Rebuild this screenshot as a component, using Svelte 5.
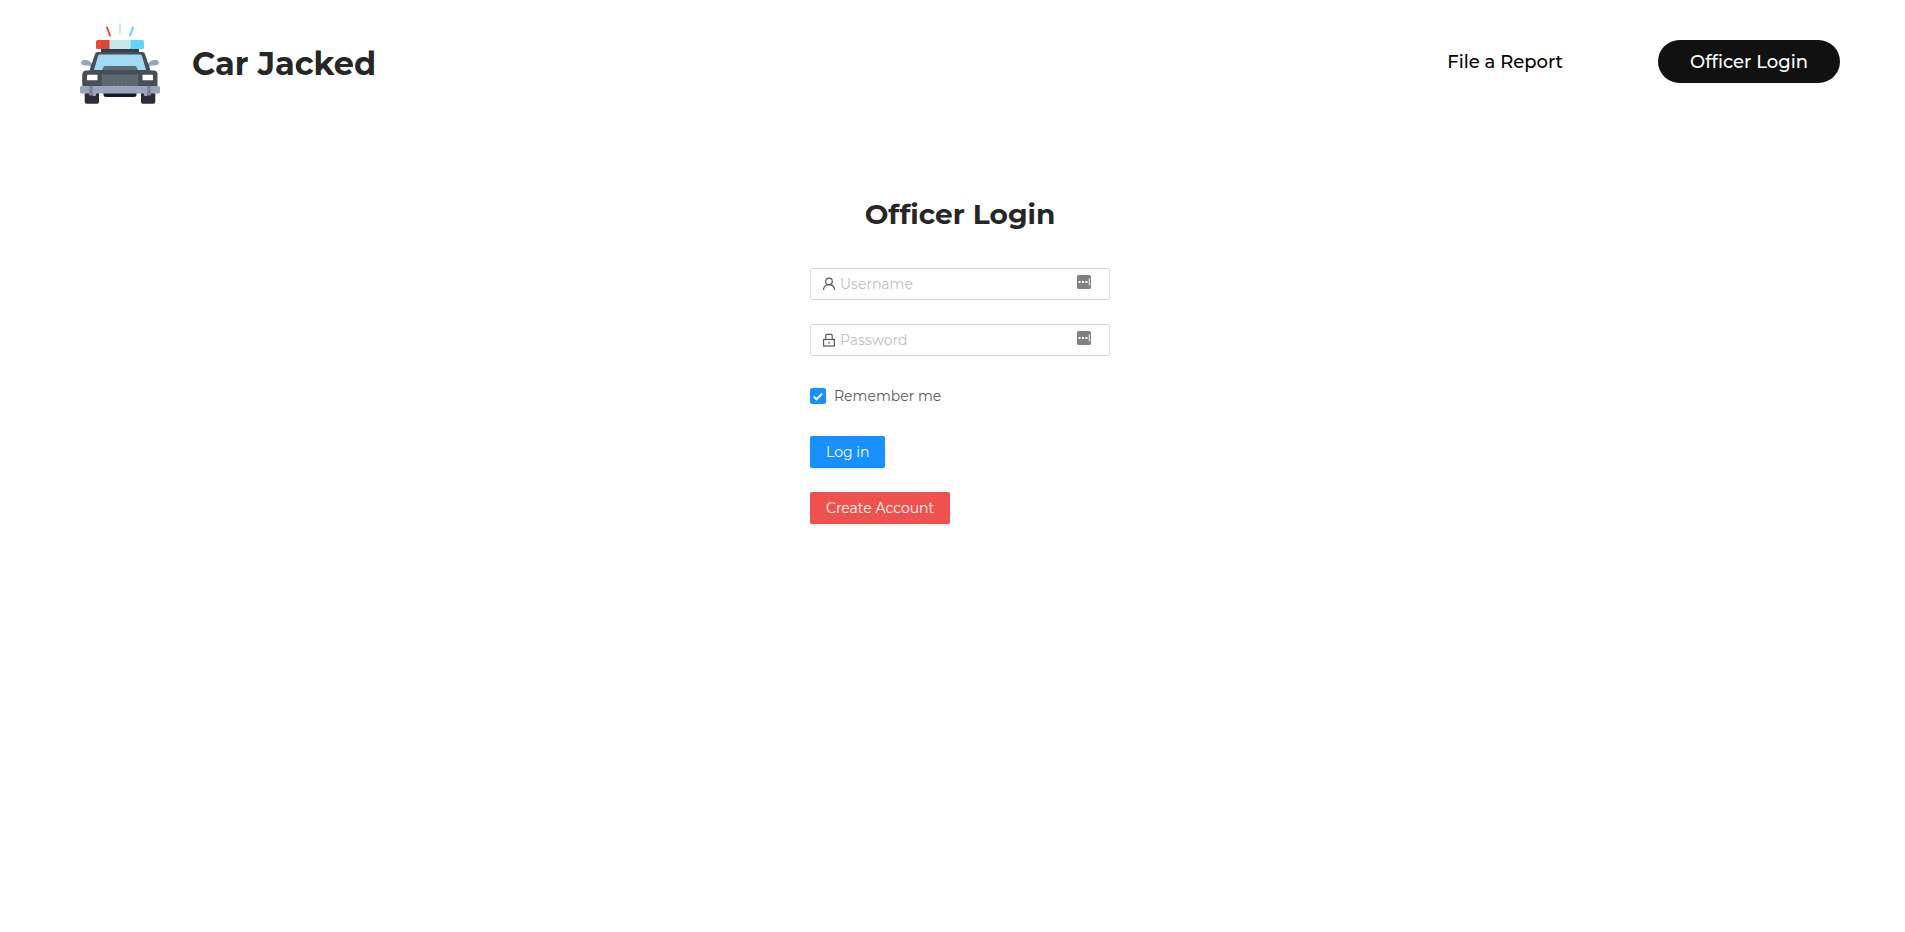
<script>
  let username = $state('');
  let password = $state('');
  let remember = $state(true);
</script>

{#snippet keyBadge()}
  <svg class="badge" viewBox="0 0 14 14" aria-hidden="true">
    <rect width="14" height="14" rx="1.5" fill="#7f7f7f" />
    <path d="M1.6 6h2v2h-2zM5 6h2v2h-2zM8.400 6h2v2h-2zM11.800 3.500h1v7h-1z" fill="#fff" />
  </svg>
{/snippet}

<header>
  <a class="brand" href="#home">
    <svg class="logo" viewBox="0 0 80 80" aria-hidden="true">
      <g stroke-width="2" stroke-linecap="round">
        <path d="M27 3.500l3 8" stroke="#e64c3c" />
        <path d="M40 1v8" stroke="#c8e6ea" />
        <path d="M53 3.500l-3 8" stroke="#60d5f5" />
      </g>
      <path d="M4.700 67H19v10.700a2 2 0 0 1-2 2H6.700a2 2 0 0 1-2-2zM61 67h14.300v10.700a2 2 0 0 1-2 2H63a2 2 0 0 1-2-2z" fill="#2c2d3c" />
      <path d="M23.500 67h33v3.500a2.500 2.500 0 0 1-2.500 2.500H26a2.500 2.500 0 0 1-2.500-2.500z" fill="#0c1c2c" />
      <rect x="21" y="24" width="38" height="6" fill="#394049" />
      <path d="M12 44l-3-2.500H5.500C3 41.500 1 40.500 1 38.300 1 36.600 3 36 5 36c4 0 6 1.700 7 4zM68 44l3-2.500h3.500c2.500 0 4.500-1 4.500-3.200 0-1.700-2-2.300-4-2.300-4 0-6 1.700-7 4z" fill="#9aa5ba" />
      <path d="M18 28h44c1.500 0 2.500.8 3 2l5.500 16.500H74c2 0 3.500 1.500 3.500 3.500v12h-75V50c0-2 1.500-3.500 3.500-3.500h3.500L15 30c.5-1.200 1.500-2 3-2z" fill="#464f59" />
      <path d="M3 61V50" stroke="#394049" />
      <path d="M20 30.500h40c1 0 1.800.6 2 1.500L66 46H14l4-14c.3-.9 1-1.500 2-1.500z" fill="#a2daf4" />
      <path d="M21.700 47l1.500-3.500c.5-1 1.300-1.500 2.300-1.500h29c1 0 1.800.5 2.300 1.500l1.500 3.500z" fill="#5f6972" />
      <rect x="13" y="46" width="54" height="4.500" fill="#464f59" />
      <rect x="21.700" y="50.500" width="36.600" height="12" fill="#5f6972" />
      <path d="M27 56h28M27 60h28" stroke="#555e67" stroke-width="1" stroke-dasharray="2 2" />
      <rect x="7" y="50.700" width="10.500" height="5.500" rx=".5" fill="#fff" />
      <rect x="62.500" y="50.700" width="10.500" height="5.500" rx=".5" fill="#fff" />
      <rect x="0" y="62" width="80" height="7.500" rx="1.500" fill="#9aa5ba" />
      <path d="M9 62h4v9.500H9zM67 62h4v9.500h-4z" fill="#7c879b" />
      <path d="M13 62h3v9a1 1 0 0 1-1 1h-2zM67 62h-3v9a1 1 0 0 0 1 1h2z" fill="#9aa5ba" />
      <path d="M17.500 16H30v9H17.500a1.500 1.500 0 0 1-1.500-1.500v-6a1.500 1.500 0 0 1 1.500-1.500z" fill="#e64c3c" />
      <path d="M21 16h9v9h-9z" fill="#d9473a" />
      <path d="M29.500 16h21v9h-21z" fill="#c8e6ea" />
      <path d="M50.500 16h12a1.500 1.500 0 0 1 1.500 1.500v6a1.500 1.500 0 0 1-1.500 1.500h-12z" fill="#60d5ff" />
    </svg>
    <span class="name">Car Jacked</span>
  </a>
  <nav>
    <a class="link" href="#report">File a Report</a>
    <a class="pill" href="#login">Officer Login</a>
  </nav>
</header>

<main>
  <form onsubmit={(e) => e.preventDefault()}>
    <h1>Officer Login</h1>
    <label class="field">
      <svg class="icon" viewBox="0 0 14 14" fill="none" stroke="#595959" stroke-width="1.2" aria-hidden="true">
        <circle cx="7" cy="4.400" r="3.300" />
        <path d="M1.500 13c0-3.200 2.200-5.300 5.500-5.300s5.500 2.100 5.500 5.300" />
      </svg>
      <input type="text" placeholder="Username" aria-label="Username" bind:value={username} />
      {@render keyBadge()}
    </label>
    <label class="field">
      <svg class="icon" viewBox="0 0 14 14" fill="none" stroke="#595959" stroke-width="1.200" aria-hidden="true">
        <rect x="1.600" y="6.500" width="10.800" height="6.500" />
        <path d="M3.800 6.500V2.600c0-.7.4-1.200 1.100-1.200h4.200c.7 0 1.100.5 1.100 1.200v3.900M7 8.700v2" />
      </svg>
      <input type="password" placeholder="Password" aria-label="Password" bind:value={password} />
      {@render keyBadge()}
    </label>
    <label class="remember">
      <input type="checkbox" bind:checked={remember} />
      <span>Remember me</span>
    </label>
    <button class="primary" type="submit">Log in</button>
    <button class="danger" type="button">Create Account</button>
  </form>
</main>

<style>
  :global(body) {
    margin: 0;
    background: #fff;
    color: #262626;
    font-family: Montserrat, Inter, sans-serif;
    font-size: 14px;
    font-weight: 400;
    font-feature-settings: "tnum", "liga" 0;
  }
  a {
    text-decoration: none;
  }
  header {
    display: flex;
    justify-content: space-between;
    align-items: center;
    padding: 24px 65px 24px 80px;
  }
  .brand {
    display: flex;
    align-items: center;
    gap: 32px;
    color: #262626;
  }
  .logo {
    width: 80px;
    height: 80px;
  }
  .name {
    font-size: 32px;
    font-weight: 700;
    line-height: 40px;
  }
  nav {
    display: flex;
    align-items: center;
    gap: 95px;
    padding-bottom: 5px;
    font-size: 18px;
    font-weight: 500;
    line-height: 28px;
  }
  .link {
    color: #000;
  }
  .pill {
    padding: 8px 32px 7px;
    border-radius: 22px;
    background: #111;
    color: #fff;
  }
  main {
    display: flex;
    justify-content: center;
    padding: 64px 0 32px 15px;
  }
  form {
    display: flex;
    flex-direction: column;
    align-items: flex-start;
    gap: 24px;
    width: 300px;
  }
  h1 {
    align-self: center;
    margin: 0 0 8px;
    padding: 2px 0;
    font-size: 28px;
    font-weight: 700;
    line-height: 40px;
  }
  .field {
    display: flex;
    align-items: center;
    box-sizing: border-box;
    width: 100%;
    height: 32px;
    padding: 0 18px 0 11px;
    border: 1px solid #d9d9d9;
    border-radius: 2px;
  }
  .icon {
    flex: none;
    width: 14px;
    height: 14px;
    margin-right: 4px;
  }
  .field input {
    flex: 1;
    min-width: 0;
    padding: 0;
    border: 0;
    outline: 0;
    background: none;
    color: #595959;
    font: inherit;
  }
  .field input::placeholder {
    color: #bfbfbf;
  }
  .badge {
    flex: none;
    width: 14px;
    height: 14px;
    margin-bottom: 4px;
  }
  .remember {
    display: flex;
    align-items: center;
    gap: 8px;
    height: 32px;
    color: #595959;
  }
  .remember input {
    width: 16px;
    height: 16px;
    margin: 0;
    appearance: none;
    border: 1px solid #d9d9d9;
    border-radius: 2px;
    background: #fff;
  }
  .remember input:checked {
    border-color: #1890ff;
    background: #1890ff url("data:image/svg+xml,%3Csvg xmlns='http://www.w3.org/2000/svg' viewBox='0 0 14 14'%3E%3Cpath d='M2.700 7.500l2.800 2.800 5.500-5.500' fill='none' stroke='white' stroke-width='2'/%3E%3C/svg%3E") center / 14px;
  }
  button {
    height: 32px;
    padding: 0 16px;
    border: 0;
    border-radius: 2px;
    box-shadow: 0 2px 0 rgba(0, 0, 0, 0.04);
    color: #fff;
    font: inherit;
  }
  .primary {
    background: #1890ff;
  }
  .danger {
    background: #ee514e;
  }
</style>
